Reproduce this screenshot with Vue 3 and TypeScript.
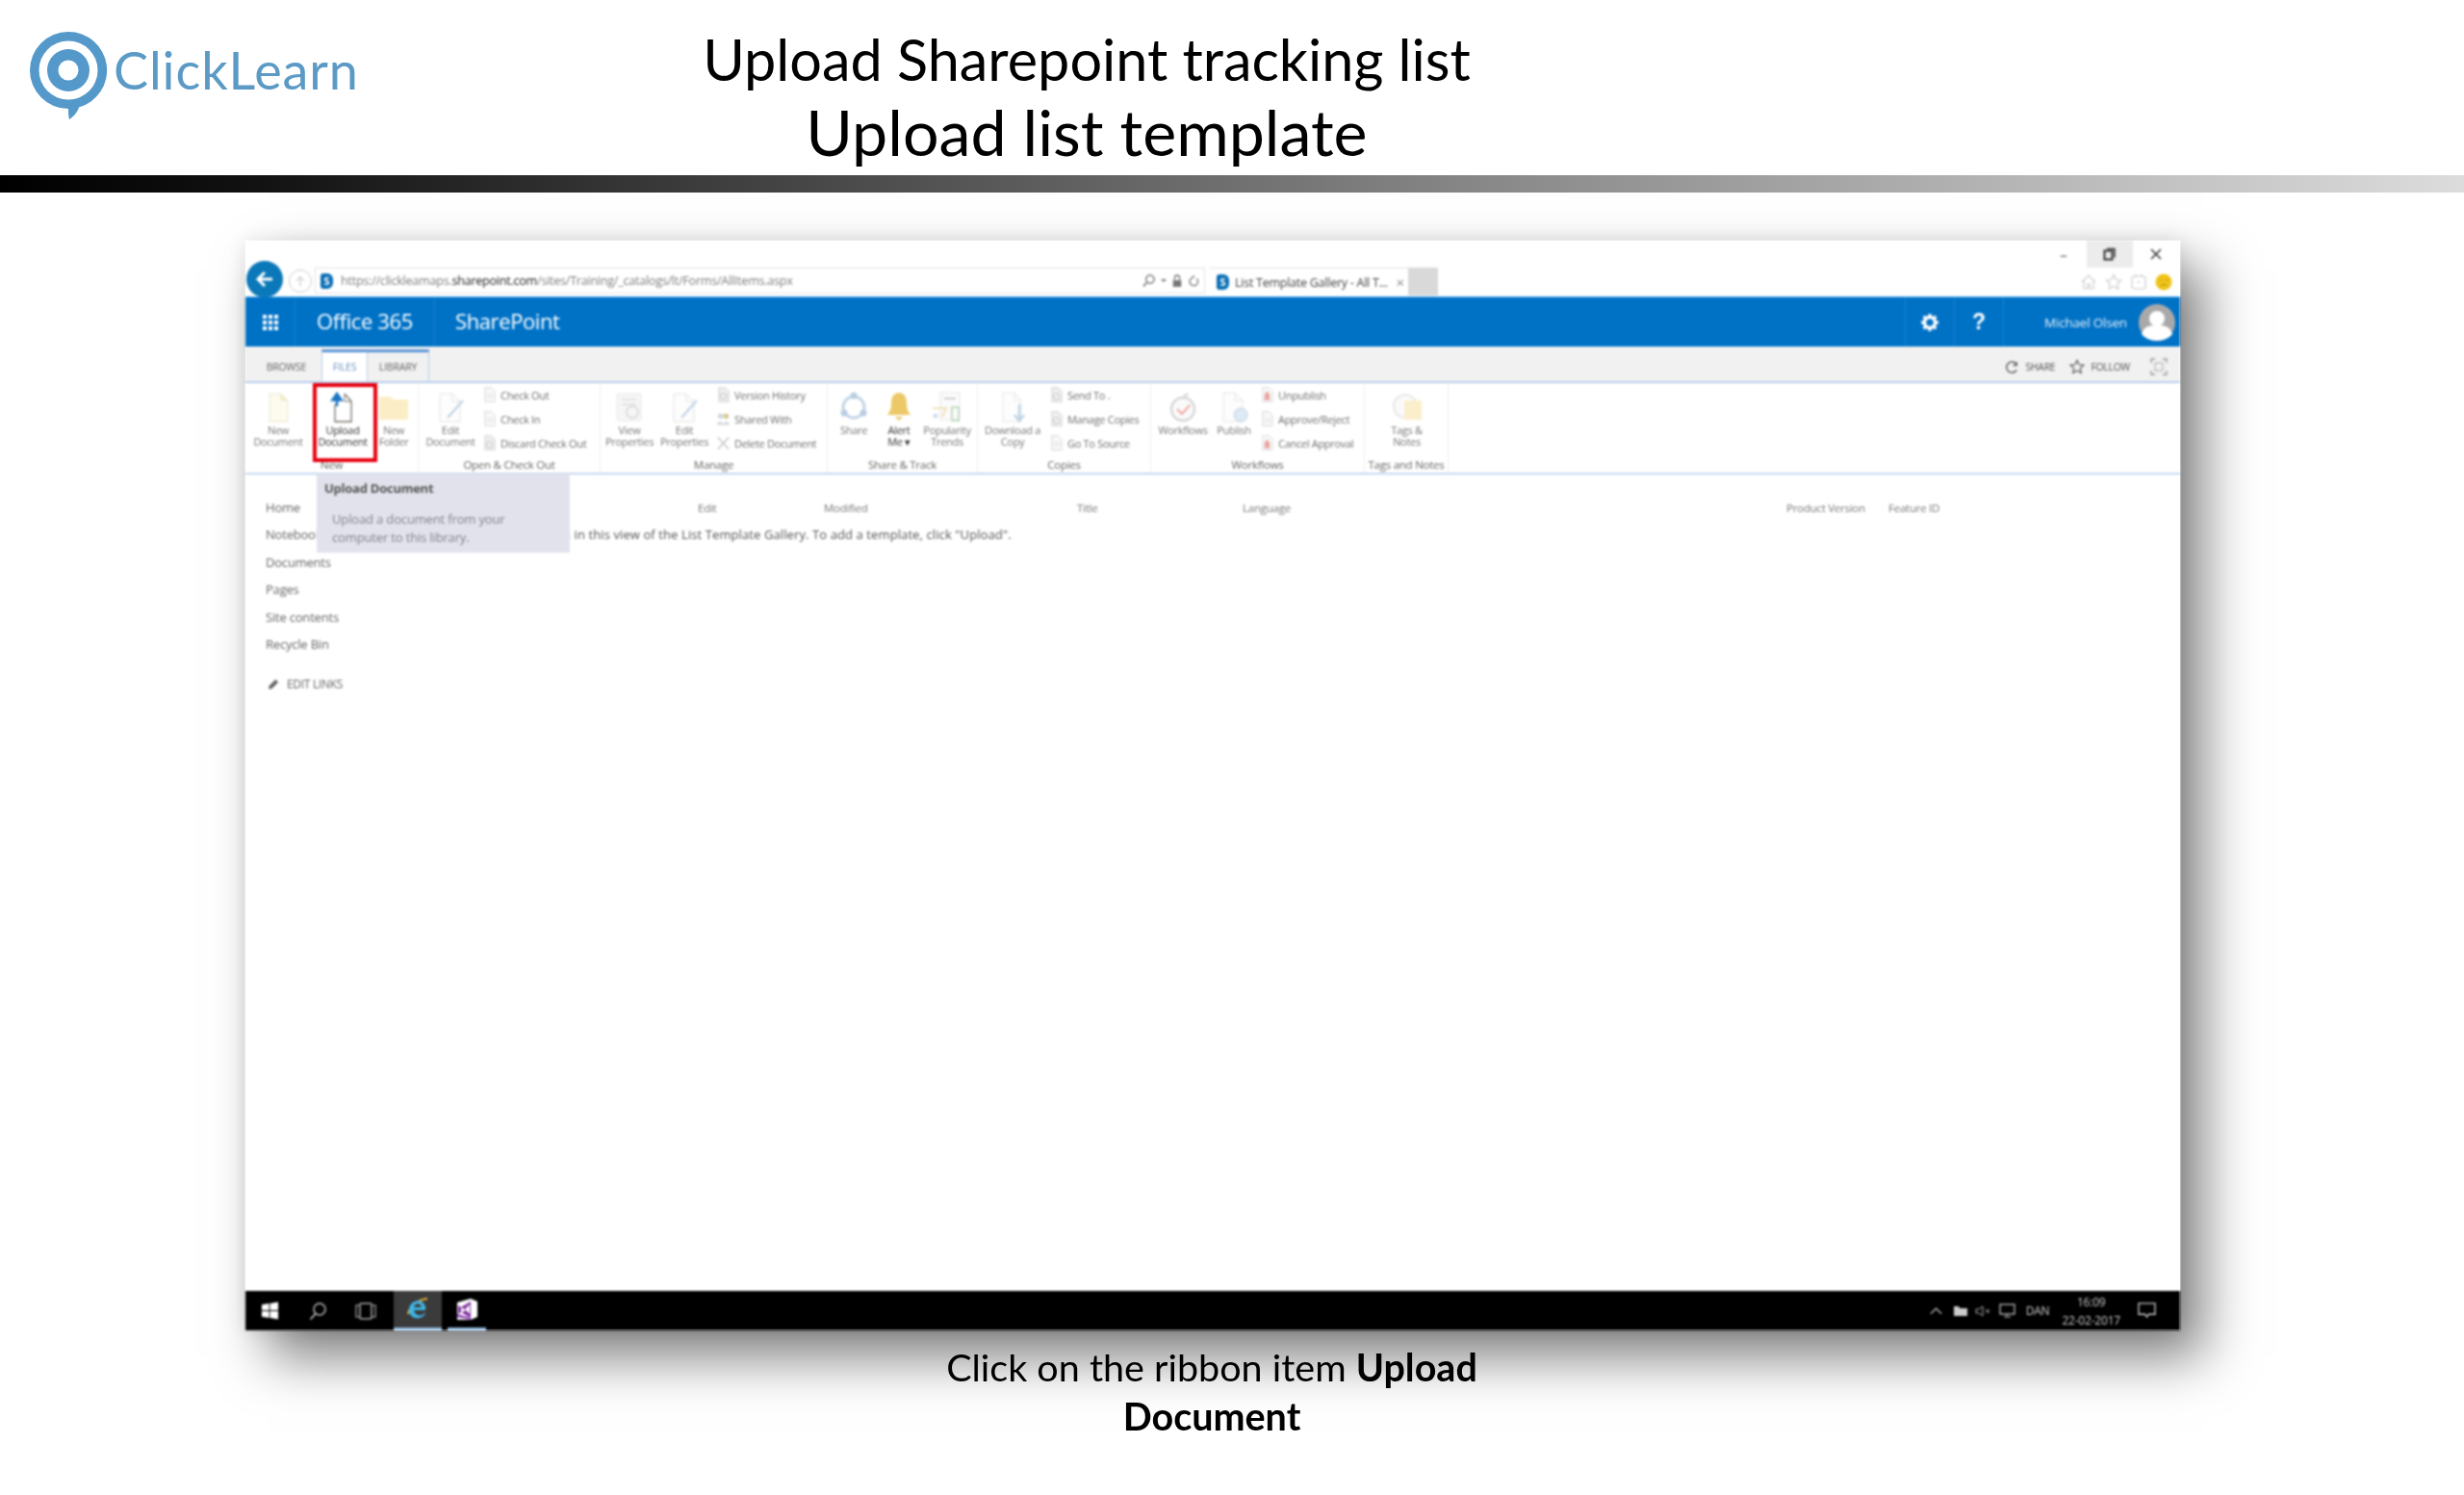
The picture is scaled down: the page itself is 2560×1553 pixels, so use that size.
<script setup lang="ts">
interface Big { kind: 'big'; icon: string; lines: string[]; w: number; strong?: boolean; mark?: boolean }
interface Small { kind: 'small'; pad: number; items: { icon: string; text: string }[] }
interface Group { name: string; w: number; parts: (Big | Small)[] }

const groups: Group[] = [
  { name: 'New', w: 180, parts: [
    { kind: 'big', icon: 'doc', lines: ['New', 'Document'], w: 68 },
    { kind: 'big', icon: 'upload', lines: ['Upload', 'Document'], w: 66, strong: true, mark: true },
    { kind: 'big', icon: 'folder', lines: ['New', 'Folder'], w: 40 },
  ] },
  { name: 'Open & Check Out', w: 189, parts: [
    { kind: 'big', icon: 'edit', lines: ['Edit', 'Document'], w: 66 },
    { kind: 'small', pad: 19, items: [
      { icon: 's-doc', text: 'Check Out' },
      { icon: 's-doc', text: 'Check In' },
      { icon: 's-disc', text: 'Discard Check Out' },
    ] },
  ] },
  { name: 'Manage', w: 236, parts: [
    { kind: 'big', icon: 'props', lines: ['View', 'Properties'], w: 60 },
    { kind: 'big', icon: 'edit', lines: ['Edit', 'Properties'], w: 54 },
    { kind: 'small', pad: 25, items: [
      { icon: 's-disc', text: 'Version History' },
      { icon: 's-people', text: 'Shared With' },
      { icon: 's-x', text: 'Delete Document' },
    ] },
  ] },
  { name: 'Share & Track', w: 156, parts: [
    { kind: 'big', icon: 'share', lines: ['Share'], w: 54 },
    { kind: 'big', icon: 'bell', lines: ['Alert', 'Me ▾'], w: 40, strong: true },
    { kind: 'big', icon: 'trend', lines: ['Popularity', 'Trends'], w: 60 },
  ] },
  { name: 'Copies', w: 180, parts: [
    { kind: 'big', icon: 'download', lines: ['Download a', 'Copy'], w: 72 },
    { kind: 'small', pad: 21, items: [
      { icon: 's-disc', text: 'Send To .' },
      { icon: 's-disc', text: 'Manage Copies' },
      { icon: 's-doc', text: 'Go To Source' },
    ] },
  ] },
  { name: 'Workflows', w: 222, parts: [
    { kind: 'big', icon: 'flow', lines: ['Workflows'], w: 66 },
    { kind: 'big', icon: 'publish', lines: ['Publish'], w: 40 },
    { kind: 'small', pad: 26, items: [
      { icon: 's-red', text: 'Unpublish' },
      { icon: 's-doc', text: 'Approve/Reject' },
      { icon: 's-red', text: 'Cancel Approval' },
    ] },
  ] },
  { name: 'Tags and Notes', w: 87, parts: [
    { kind: 'big', icon: 'tags', lines: ['Tags &', 'Notes'], w: 87 },
  ] },
]

const nav: string[] = ['Home', 'Notebook', 'Documents', 'Pages', 'Site contents', 'Recycle Bin']
const cols: string[] = ['Edit', 'Modified', 'Title', 'Language', 'Product Version', 'Feature ID']
</script>

<template>
  <div class="page">
    <svg class="defs" aria-hidden="true">
      <symbol id="doc" viewBox="0 0 34 34"><path d="M8 3h12l7 7v22H8z" fill="#fdfbee" stroke="#e9e6d4"/><path d="M20 3v7h7" fill="#f5edc0" stroke="#e9e6d4"/></symbol>
      <symbol id="upload" viewBox="0 0 34 34"><path d="M9 9h3M19 3l7 8v21H9V14" fill="#fff" stroke="#77736a" stroke-width="1.3"/><path d="M19 3v8h7" fill="none" stroke="#77736a"/><path d="M11 16V6M6.500 9.500 11 3l4.500 6.500z" fill="#1c74c4" stroke="#1c74c4" stroke-width="2.600"/></symbol>
      <symbol id="folder" viewBox="0 0 34 34"><path d="M2 6h12l3 3h15v21H2z" fill="#fbeec6"/></symbol>
      <symbol id="edit" viewBox="0 0 34 34"><path d="M6 3h13l8 8v21H6z" fill="#fdfdfd" stroke="#e4e4e4"/><path d="M19 3v8h8" fill="none" stroke="#e4e4e4"/><path d="M14 28 30 10" stroke="#c5d5e6" stroke-width="2.500"/></symbol>
      <symbol id="props" viewBox="0 0 34 34"><rect x="4" y="3" width="25" height="28" rx="2" fill="#f6f6f6" stroke="#e8e8e8"/><path d="M9 9h15M9 14h15" stroke="#e4e4e4" stroke-width="2"/><circle cx="20" cy="22" r="6" fill="none" stroke="#dedede" stroke-width="2"/></symbol>
      <symbol id="share" viewBox="0 0 34 34"><circle cx="17" cy="17" r="11" fill="none" stroke="#c3d5e6" stroke-width="3"/><circle cx="17" cy="5" r="3.500" fill="#b7cde2"/><circle cx="7" cy="23" r="3.500" fill="#b7cde2"/><circle cx="27" cy="23" r="3.500" fill="#b7cde2"/></symbol>
      <symbol id="bell" viewBox="0 0 34 34"><path d="M17 2c6 0 8 5 8 11 0 7 2 9 4 12H5c2-3 4-5 4-12C9 7 11 2 17 2z" fill="#ecc968"/><path d="M13 27h8l-4 4z" fill="#ecc968"/></symbol>
      <symbol id="trend" viewBox="0 0 34 34"><rect x="10" y="2" width="20" height="28" fill="#fbfbfb" stroke="#e6e6e6"/><path d="M14 8h12" stroke="#cfcfcf" stroke-width="2"/><rect x="22" y="17" width="7" height="14" fill="none" stroke="#c2dcc4" stroke-width="2"/><path d="M2 18h14l-4 9" fill="none" stroke="#f0e3b8" stroke-width="2"/><circle cx="5" cy="26" r="2.500" fill="#cfdeec"/></symbol>
      <symbol id="download" viewBox="0 0 34 34"><path d="M7 2h12l7 8v22H7z" fill="#fdfdfd" stroke="#e6e6e6"/><path d="M19 2v8h7" fill="none" stroke="#e6e6e6"/><path d="M24 14v15M19 25l5 6 5-6" fill="none" stroke="#bdd4e7" stroke-width="2.500"/></symbol>
      <symbol id="flow" viewBox="0 0 34 34"><circle cx="17" cy="19" r="12" fill="#fafafa" stroke="#d8d8d8" stroke-width="2.500"/><path d="M17 7l5-4" stroke="#d8d8d8" stroke-width="2.500"/><path d="M11 19l5 5 8-9" fill="none" stroke="#f0aaa5" stroke-width="2"/></symbol>
      <symbol id="publish" viewBox="0 0 34 34"><path d="M6 2h12l8 8v22H6z" fill="#fdfdfd" stroke="#e6e6e6"/><path d="M18 2v8h8" fill="none" stroke="#e6e6e6"/><circle cx="24" cy="25" r="7" fill="#dde9f3" stroke="#bcd3e5"/></symbol>
      <symbol id="tags" viewBox="0 0 34 34"><circle cx="15" cy="16" r="12" fill="#fafafa" stroke="#e8e8e8" stroke-width="2"/><rect x="14" y="10" width="18" height="20" fill="#fbeecb"/></symbol>
      <symbol id="s-doc" viewBox="0 0 16 18"><path d="M3 1h7l4 4v12H3z" fill="#f8f8f8" stroke="#d8d8d8"/><path d="M5 9h7M5 12h7" stroke="#dcdcdc"/></symbol>
      <symbol id="s-disc" viewBox="0 0 16 18"><path d="M3 1h7l4 4v12H3z" fill="#eeeeee" stroke="#d4d4d4"/><circle cx="8" cy="11" r="3.500" fill="none" stroke="#c4c4c4"/></symbol>
      <symbol id="s-people" viewBox="0 0 16 18"><circle cx="5" cy="6" r="3" fill="#d2d9df"/><circle cx="11" cy="6" r="3" fill="#d7c993"/><path d="M1 16c0-5 7-5 7 0zM8 16c0-5 7-5 7 0z" fill="#d2d9df"/></symbol>
      <symbol id="s-x" viewBox="0 0 16 18"><path d="M2 3l12 13M14 3 2 16" stroke="#b8b8b8" stroke-width="1.300"/></symbol>
      <symbol id="s-red" viewBox="0 0 16 18"><path d="M3 1h7l4 4v12H3z" fill="#f8f8f8" stroke="#dcdcdc"/><path d="M5 9l3-4 3 4v6H5z" fill="#eaa7a2"/></symbol>
    </svg>

    <header class="head">
      <div class="logo">
        <svg class="logo-mark" viewBox="0 0 84 94" aria-hidden="true">
          <path d="M42 1a40 40 0 0 1 11 78.500c-2 6-6 10-10 12.500-1-3-1-8-1-11A40 40 0 0 1 42 1z" fill="#5599cb"/>
          <circle cx="42" cy="41" r="30.500" fill="#fff"/>
          <circle cx="42" cy="41" r="22" fill="#5599cb"/>
          <circle cx="42" cy="41" r="10.500" fill="#fff"/>
        </svg>
        <span class="logo-text">ClickLearn</span>
      </div>
      <div class="title">
        <div class="t1">Upload Sharepoint tracking list</div>
        <div class="t2">Upload list template</div>
      </div>
    </header>
    <div class="rule"></div>

    <main class="stage">
      <div class="shot-wrap">
        <div class="shot">
          <div class="chrome">
            <span class="back">
              <svg viewBox="0 0 24 24" width="24" height="24"><path d="M20 12H6M12 5l-7 7 7 7" fill="none" stroke="#fff" stroke-width="3"/></svg>
            </span>
            <span class="fwd">
              <svg viewBox="0 0 24 24" width="16" height="16"><path d="M4 12h14M12 6l7 6-7 6" fill="none" stroke="#bbb" stroke-width="1.500" transform="rotate(-90 12 12)"/></svg>
            </span>
            <div class="addr">
              <span class="s-logo">S</span>
              <span class="url">https://clickleamaps.<b>sharepoint.com</b>/sites/Training/_catalogs/lt/Forms/AllItems.aspx</span>
              <span class="addr-tools">
                <svg viewBox="0 0 16 16" width="15" height="15"><circle cx="9.500" cy="6.500" r="4.500" fill="none" stroke="#666" stroke-width="1.400"/><path d="M6 10l-4 4.500" stroke="#666" stroke-width="1.600"/></svg>
                <span class="caret"></span>
                <svg viewBox="0 0 14 16" width="12" height="14"><rect x="2" y="7" width="10" height="8" fill="#777"/><path d="M4 7V4a3 3 0 0 1 6 0v3" fill="none" stroke="#777" stroke-width="1.500"/></svg>
                <svg viewBox="0 0 14 16" width="12" height="14"><path d="M11 5a5 5 0 1 1-4-1.500V1" fill="none" stroke="#777" stroke-width="1.500"/></svg>
              </span>
            </div>
            <div class="tab">
              <span class="s-logo">S</span>
              <span class="tab-title">List Template Gallery - All T...</span>
              <span class="tab-x">×</span>
            </div>
            <div class="newtab"></div>
            <div class="win">
              <div class="ctrls">
                <span class="ctrl">–</span>
                <span class="ctrl on">
                  <svg viewBox="0 0 14 14" width="14" height="14"><rect x="1.500" y="3.500" width="8" height="9" fill="none" stroke="#333" stroke-width="2"/><path d="M4 1.500h8v9" fill="none" stroke="#333" stroke-width="1.500"/></svg>
                </span>
                <span class="ctrl">
                  <svg viewBox="0 0 14 14" width="14" height="14"><path d="M2 2l10 10M12 2 2 12" stroke="#333" stroke-width="1.500"/></svg>
                </span>
              </div>
              <div class="tools">
                <svg viewBox="0 0 18 18" width="18" height="18"><path d="M2 9l7-7 7 7M4 8v8h4v-5h2v5h4V8" fill="none" stroke="#ccc" stroke-width="1.200"/></svg>
                <svg viewBox="0 0 18 18" width="18" height="18"><path d="M9 1.500l2.300 5 5.400.6-4 3.700 1.100 5.400L9 13.500 4.200 16.200l1.100-5.400-4-3.700 5.400-.6z" fill="none" stroke="#ccc" stroke-width="1.200"/></svg>
                <svg viewBox="0 0 18 18" width="18" height="18"><rect x="2" y="3" width="14" height="13" rx="2" fill="none" stroke="#ccc" stroke-width="1.200"/><path d="M6 1v3M12 1v3M7 9h4" stroke="#ccc" stroke-width="1.200"/></svg>
                <svg viewBox="0 0 18 18" width="18" height="18"><circle cx="9" cy="9" r="8.500" fill="#f0c419"/><path d="M6 6v2M12 6v2M5.500 13c2-2 5-2 7 0" stroke="#a98a12" fill="none"/></svg>
              </div>
            </div>
          </div>

          <div class="suite">
            <div class="waffle">
              <svg viewBox="0 0 18 18" width="18" height="18" fill="#fff"><rect x="1" y="1" width="4" height="4"/><rect x="7" y="1" width="4" height="4"/><rect x="13" y="1" width="4" height="4"/><rect x="1" y="7" width="4" height="4"/><rect x="7" y="7" width="4" height="4"/><rect x="13" y="7" width="4" height="4"/><rect x="1" y="13" width="4" height="4"/><rect x="7" y="13" width="4" height="4"/><rect x="13" y="13" width="4" height="4"/></svg>
            </div>
            <div class="brand">Office 365</div>
            <div class="app">SharePoint</div>
            <div class="cell gear">
              <svg viewBox="0 0 20 20" width="20" height="20"><circle cx="10" cy="10" r="5.500" fill="none" stroke="#fff" stroke-width="3.500"/><path d="M10 1v4M10 15v4M1 10h4M15 10h4M3.600 3.600l3 3M13.400 13.400l3 3M16.400 3.600l-3 3M6.600 13.400l-3 3" stroke="#fff" stroke-width="3"/></svg>
            </div>
            <div class="cell help">?</div>
            <div class="user">
              <span class="uname">Michael Olsen</span>
              <span class="avatar">
                <svg viewBox="0 0 38 38" width="38" height="38"><circle cx="19" cy="19" r="19" fill="#a9a9a9"/><circle cx="19" cy="15" r="8" fill="#fff"/><path d="M3 31c3-9 9-9 16-9s13 0 16 9c-3 4-9 7-16 7S6 35 3 31z" fill="#fff"/></svg>
              </span>
            </div>
          </div>

          <div class="tabs">
            <span class="rtab browse">BROWSE</span>
            <div class="ctx">
              <span class="rtab act">FILES</span>
              <span class="rtab lib">LIBRARY</span>
            </div>
            <div class="rt-right">
              <svg viewBox="0 0 16 16" width="15" height="15"><path d="M13 5a6 6 0 1 0 0 6M13 2v4h-4" fill="none" stroke="#555" stroke-width="1.500"/></svg>
              <span class="rt-txt">SHARE</span>
              <svg class="rt-star" viewBox="0 0 18 18" width="16" height="16"><path d="M9 1.500l2.300 5 5.400.6-4 3.700 1.100 5.400L9 13.500 4.200 16.200l1.100-5.400-4-3.700 5.400-.6z" fill="none" stroke="#555" stroke-width="1.300"/></svg>
              <span class="rt-txt">FOLLOW</span>
              <svg class="rt-focus" viewBox="0 0 18 18" width="18" height="18"><path d="M1 5V1h4M13 1h4v4M17 13v4h-4M5 17H1v-4" fill="none" stroke="#999" stroke-width="1.300"/><path d="M5 5h8v8H5z" fill="none" stroke="#aaa"/></svg>
            </div>
          </div>

          <div class="ribbon">
            <section v-for="g in groups" :key="g.name" class="grp" :style="{ width: g.w + 'px' }">
              <div class="grp-body">
                <template v-for="(p, i) in g.parts" :key="i">
                  <div v-if="p.kind === 'big'" class="big" :class="{ strong: p.strong, mark: p.mark }" :style="{ width: p.w + 'px' }">
                    <svg class="big-ic" width="34" height="34"><use :href="'#' + p.icon" /></svg>
                    <span v-for="l in p.lines" :key="l" class="big-l">{{ l }}</span>
                  </div>
                  <div v-else class="smalls" :style="{ paddingLeft: p.pad + 'px' }">
                    <div v-for="it in p.items" :key="it.text" class="sm">
                      <svg class="sm-ic" width="15" height="18"><use :href="'#' + it.icon" /></svg>
                      <span>{{ it.text }}</span>
                    </div>
                  </div>
                </template>
              </div>
              <div class="grp-name">{{ g.name }}</div>
            </section>
          </div>

          <div class="content">
            <nav class="nav">
              <a v-for="n in nav" :key="n" class="nav-i">{{ n }}</a>
              <a class="nav-edit">
                <svg viewBox="0 0 14 14" width="13" height="13"><path d="M1 13l1-4 7-7 3 3-7 7z" fill="#666"/></svg>
                EDIT LINKS
              </a>
            </nav>
            <div class="list">
              <div class="cols">
                <span v-for="c in cols" :key="c">{{ c }}</span>
              </div>
              <p class="msg">There are no items in this view of the List Template Gallery. To add a template, click "Upload".</p>
            </div>
            <aside class="tip">
              <div class="tip-h">Upload Document</div>
              <div class="tip-b">Upload a document from your computer to this library.</div>
            </aside>
          </div>

          <footer class="taskbar">
            <span class="tb-i">
              <svg viewBox="0 0 20 20" width="19" height="19" fill="#fff"><path d="M1 3.500 9 2v7.500H1zM10 2l9-1.500v9H10zM1 10.500h8V18l-8-1.500zM10 10.500h9v9L10 18z"/></svg>
            </span>
            <span class="tb-i">
              <svg viewBox="0 0 20 20" width="20" height="20"><circle cx="12" cy="8" r="6" fill="none" stroke="#bbb" stroke-width="1.500"/><path d="M8 12.500 2.500 18.500" stroke="#bbb" stroke-width="1.800"/></svg>
            </span>
            <span class="tb-i">
              <svg viewBox="0 0 24 20" width="24" height="20"><rect x="6" y="2" width="12" height="16" rx="1" fill="none" stroke="#aaa" stroke-width="1.500"/><path d="M6 4H2v12h4M18 4h4v12h-4" fill="none" stroke="#888" stroke-width="1.500"/></svg>
            </span>
            <span class="tb-ie">
              <svg viewBox="0 0 26 26" width="26" height="26"><path d="M3 18C5 9 14 3 23 2" fill="none" stroke="#e8b93a" stroke-width="2"/><path d="M21 14H9c1 6 8 7 11 3h1c-3 8-17 7-17-3S17 0 21 10zM9 11h8c-1-5-7-5-8 0z" fill="#3fb5e6"/></svg>
            </span>
            <span class="tb-vs">
              <svg viewBox="0 0 24 24" width="24" height="24"><path d="M16 1l7 3v16l-7 3H2V5z" fill="#fff"/><path d="M16 4v17L6 15l-3 2V8l3 2z" fill="#7a2a9a"/><path d="M2 20l14 3v-2L2 17z" fill="#8e3ab0"/><path d="M6 10l5 3-5 3zM15 7l-5 5 5 5z" fill="#fff"/></svg>
            </span>
            <div class="tray">
              <svg viewBox="0 0 14 8" width="13" height="8"><path d="M1 7l6-6 6 6" fill="none" stroke="#bbb" stroke-width="1.300"/></svg>
              <svg class="tray-net" viewBox="0 0 18 12" width="18" height="12"><path d="M2 1h5l1 2h8v8H2z" fill="#ccc"/></svg>
              <svg viewBox="0 0 16 12" width="16" height="12"><path d="M1 4h3l4-3v10L4 8H1z" fill="none" stroke="#aaa"/><path d="M11 4l4 4M15 4l-4 4" stroke="#aaa"/></svg>
              <svg viewBox="0 0 18 16" width="18" height="16"><rect x="1" y="1" width="15" height="10" fill="none" stroke="#bbb" stroke-width="1.300"/><path d="M8 11v3M5 14h7" stroke="#bbb"/></svg>
              <span class="lang">DAN</span>
              <span class="clock"><span>16:09</span><span>22-02-2017</span></span>
              <svg class="notif" viewBox="0 0 20 18" width="19" height="17"><path d="M1 1h18v12h-7l-2 3-2-3H1z" fill="none" stroke="#ccc" stroke-width="1.400"/></svg>
            </div>
          </footer>
        </div>
      </div>
      <p class="caption">Click on the ribbon item <b>Upload</b><br><b>Document</b></p>
    </main>
  </div>
</template>

<style>
html, body { margin: 0; background: #fff; }
</style>

<style scoped>
.page {
  width: 2560px;
  height: 1553px;
  overflow: hidden;
  background: #fff;
  display: flex;
  flex-direction: column;
  font-family: "Open Sans", "Liberation Sans", sans-serif;
}
.defs { position: absolute; width: 0; height: 0; }

.head { height: 182px; display: flex; padding-left: 29px; box-sizing: border-box; }
.logo { width: 345px; display: flex; align-items: flex-start; padding-top: 32px; box-sizing: border-box; filter: blur(0.7px); }
.logo-mark { width: 84px; height: 94px; flex: none; }
.logo-text {
  font-family: Lato, sans-serif;
  font-weight: 400;
  font-size: 54px;
  line-height: 66px;
  letter-spacing: 0.9px;
  color: #5c9ac6;
  margin: 8px 0 0 5px;
}
.title { width: 1510px; text-align: center; color: #000; font-family: Lato, sans-serif; padding-top: 28px; filter: blur(0.4px); }
.t1 { font-size: 59.4px; line-height: 66px; }
.t2 { font-size: 66.3px; line-height: 86px; }

.rule { height: 18px; background: linear-gradient(90deg, #000 0%, #111 10%, #8c8c8c 62%, #dcdcdc 100%); }

.stage { flex: 1; padding: 50px 0 0 255px; box-sizing: border-box; }
.shot-wrap {
  width: 2010px;
  height: 1132px;
  background: #fff;
  box-shadow: 24px 28px 52px rgba(0, 0, 0, 0.5), 0 0 18px rgba(0, 0, 0, 0.1);
}
.shot {
  height: 100%;
  display: flex;
  flex-direction: column;
  filter: blur(0.8px);
  background: #fff;
}

.chrome { height: 58px; display: flex; align-items: flex-end; flex: none; }
.back {
  width: 38px; height: 38px; border-radius: 50%; background: #0b78b9;
  margin: 0 0 -1px 1px; display: flex; align-items: center; justify-content: center; flex: none; position: relative; z-index: 1;
}
.fwd {
  width: 24px; height: 24px; border: 1px solid #ccc; border-radius: 50%; box-sizing: border-box;
  margin: 0 3px 4px 6px; display: flex; align-items: center; justify-content: center; flex: none;
}
.addr {
  width: 925px; height: 27px; box-sizing: border-box; border: 1.500px solid #e3e3e3; border-bottom-width: 1px;
  margin-bottom: 3px; display: flex; align-items: center; padding-left: 5px; flex: none; background: #fff;
}
.s-logo {
  width: 13px; height: 16px; border-radius: 3px 6px 6px 3px; background: #0a6fb5; color: #fff;
  font-size: 11px; line-height: 16px; text-align: center; font-weight: 700; flex: none;
}
.url { margin-left: 8px; font-size: 12.6px; color: #7e7e7e; letter-spacing: -0.26px; white-space: nowrap; }
.url b { color: #222; font-weight: 400; }
.addr-tools { margin-left: auto; display: flex; align-items: center; gap: 5px; padding-right: 5px; }
.caret { width: 0; height: 0; border: 3px solid transparent; border-top-color: #777; margin-top: 3px; }
.tab {
  width: 207px; height: 29px; margin-left: 4px; margin-bottom: 1px; box-sizing: border-box; border-top: 1.500px solid #e3e3e3; display: flex; align-items: center;
  padding-left: 8px; font-size: 12.5px; color: #444; flex: none; background: #fff;
}
.tab-title { margin-left: 6px; white-space: nowrap; letter-spacing: -0.25px; }
.tab-x { margin-left: auto; padding-right: 4px; color: #888; font-size: 15px; }
.newtab { width: 31px; height: 29px; margin-bottom: 1px; background: #d9d9d9; flex: none; }
.win { margin-left: auto; width: 145px; height: 100%; display: flex; flex-direction: column; flex: none; }
.ctrls { height: 28px; display: flex; }
.ctrl { width: 48px; display: flex; align-items: center; justify-content: center; color: #888; font-size: 15px; font-weight: 700; }
.ctrl.on { background: #ececec; }
.tools { height: 30px; display: flex; align-items: center; justify-content: flex-end; gap: 8px; padding-right: 8px; }

.suite { height: 52px; background: #0072c6; color: #fff; display: flex; align-items: center; flex: none; border-top: 1px solid #3aa0e6; box-sizing: border-box; }
.waffle { width: 52px; height: 100%; display: flex; align-items: center; justify-content: center; border-right: 1px solid #1a81cc; box-sizing: border-box; flex: none; }
.brand { width: 145px; padding: 0 0 3px 22px; box-sizing: border-box; height: 100%; display: flex; align-items: center; font-size: 22px; letter-spacing: -0.4px; border-right: 1px solid #1a81cc; flex: none; }
.app { padding: 0 0 3px 21px; font-size: 22px; letter-spacing: -0.4px; flex: 1; }
.cell { width: 51px; height: 100%; display: flex; align-items: center; justify-content: center; border-left: 1px solid #1a81cc; box-sizing: border-box; flex: none; }
.help { font-size: 23px; font-weight: 700; font-family: "Liberation Sans", sans-serif; }
.user { width: 184px; height: 100%; box-sizing: border-box; border-left: 1px solid #1a81cc; display: flex; align-items: center; padding-left: 42px; flex: none; }
.uname { font-size: 13.5px; width: 91px; white-space: nowrap; letter-spacing: -0.2px; color: #e3effa; }
.avatar { margin-left: 7px; height: 38px; }

.tabs { height: 38px; flex: none; background: #f1f1f1; border-bottom: 2px solid #b7cdea; box-sizing: border-box; display: flex; align-items: flex-end; }
.rtab { font-size: 10.5px; color: #666; display: flex; align-items: center; justify-content: center; height: 30px; letter-spacing: -0.2px; box-sizing: border-box; }
.browse { margin-left: 21px; width: 43px; }
.ctx { margin-left: 15px; display: flex; border-top: 3px solid #5a93d8; border-left: 1px solid #b7cdea; border-right: 1px solid #b7cdea; }
.act { width: 47px; background: #fff; color: #6e93c3; border-right: 1px solid #b7cdea; }
.lib { width: 63px; color: #666; }
.rt-right { margin-left: auto; height: 30px; display: flex; align-items: center; color: #555; font-size: 10.5px; padding-right: 13px; }
.rt-txt { margin-left: 6px; letter-spacing: -0.3px; }
.rt-star { margin-left: 15px; }
.rt-focus { margin-left: 21px; }

.ribbon { height: 95px; flex: none; border-bottom: 2px solid #c3d7ef; box-sizing: border-box; display: flex; background: #fff; }
.grp { display: flex; flex-direction: column; border-right: 1px solid #f0f0f0; box-sizing: border-box; flex: none; }
.grp-body { height: 77px; display: flex; }
.grp-name { height: 16px; line-height: 16px; text-align: center; font-size: 11.5px; color: #666; white-space: nowrap; letter-spacing: -0.25px; }
.big { display: flex; flex-direction: column; align-items: center; padding-top: 8px; box-sizing: border-box; flex: none; position: relative; }
.big-ic { flex: none; margin-bottom: 1px; }
.big-l { font-size: 11px; line-height: 12px; color: #777; white-space: nowrap; letter-spacing: -0.3px; }
.strong .big-l { color: #333; }
.mark::after {
  content: "";
  position: absolute;
  left: 2px;
  top: 0;
  width: 67px;
  height: 82px;
  border: 4px solid #e8000f;
  box-sizing: border-box;
}
.smalls { padding-top: 0; }
.sm { height: 25px; display: flex; align-items: center; font-size: 11px; color: #6e6e6e; white-space: nowrap; letter-spacing: -0.3px; position: relative; }
.sm-ic { position: absolute; left: -19px; top: 3px; }

.content { flex: 1; display: flex; position: relative; min-height: 0; }
.nav { width: 201px; padding: 20px 0 0 21px; display: flex; flex-direction: column; flex: none; }
.nav-i { height: 28.4px; line-height: 28.4px; font-size: 13px; color: #666; letter-spacing: -0.2px; white-space: nowrap; }
.nav-edit { margin-top: 13px; height: 28px; display: flex; align-items: center; gap: 7px; font-size: 12px; color: #666; padding-left: 2px; letter-spacing: -0.3px; }
.list { flex: 1; padding-top: 27px; font-size: 11.5px; color: #777; }
.cols { display: grid; grid-template-columns: 131px 263px 172px 565px 106px 1fr; padding-left: 248px; height: 16px; line-height: 16px; letter-spacing: -0.25px; white-space: nowrap; }
.msg { margin: 11px 0 0; line-height: 16px; font-size: 13px; letter-spacing: 0.1px; color: #555; white-space: nowrap; }
.tip {
  position: absolute; left: 74px; top: -1px; width: 263px; height: 82px; background: #e1e2ec; box-sizing: border-box;
  padding: 6px 8px;
}
.tip-h { font-size: 13px; font-weight: 700; color: #555; line-height: 18px; letter-spacing: -0.25px; }
.tip-b { margin: 14px 0 0 8px; width: 200px; font-size: 13px; color: #82838d; line-height: 19px; letter-spacing: -0.15px; }

.taskbar { height: 41px; flex: none; background: #000; display: flex; align-items: center; }
.tb-i { width: 50px; display: flex; justify-content: center; flex: none; }
.tb-ie { width: 50px; height: 41px; background: #3b3b3b; border-bottom: 3px solid #96bde0; box-sizing: border-box; display: flex; align-items: center; justify-content: center; margin-left: 4px; flex: none; }
.tb-vs { width: 40px; height: 41px; margin-left: 6px; border-bottom: 3px solid #96bde0; box-sizing: border-box; display: flex; align-items: center; justify-content: center; flex: none; }
.tray { margin-left: auto; display: flex; align-items: center; gap: 9px; color: #ccc; padding-right: 25px; }
.tray-net { margin: 0 -3px 0 1px; }
.lang { font-size: 12px; letter-spacing: -0.2px; margin-left: 1px; }
.clock { display: flex; flex-direction: column; align-items: center; font-size: 12px; line-height: 19px; letter-spacing: -0.2px; margin-left: 4px; }
.notif { margin-left: 9px; }

.caption {
  width: 620px;
  margin: 12px 0 0 694px;
  text-align: center;
  font-family: Lato, sans-serif;
  font-size: 39.5px;
  line-height: 51px;
  color: #000;
  position: relative;
  filter: blur(0.4px);
}
.caption b { font-weight: 700; }
</style>
